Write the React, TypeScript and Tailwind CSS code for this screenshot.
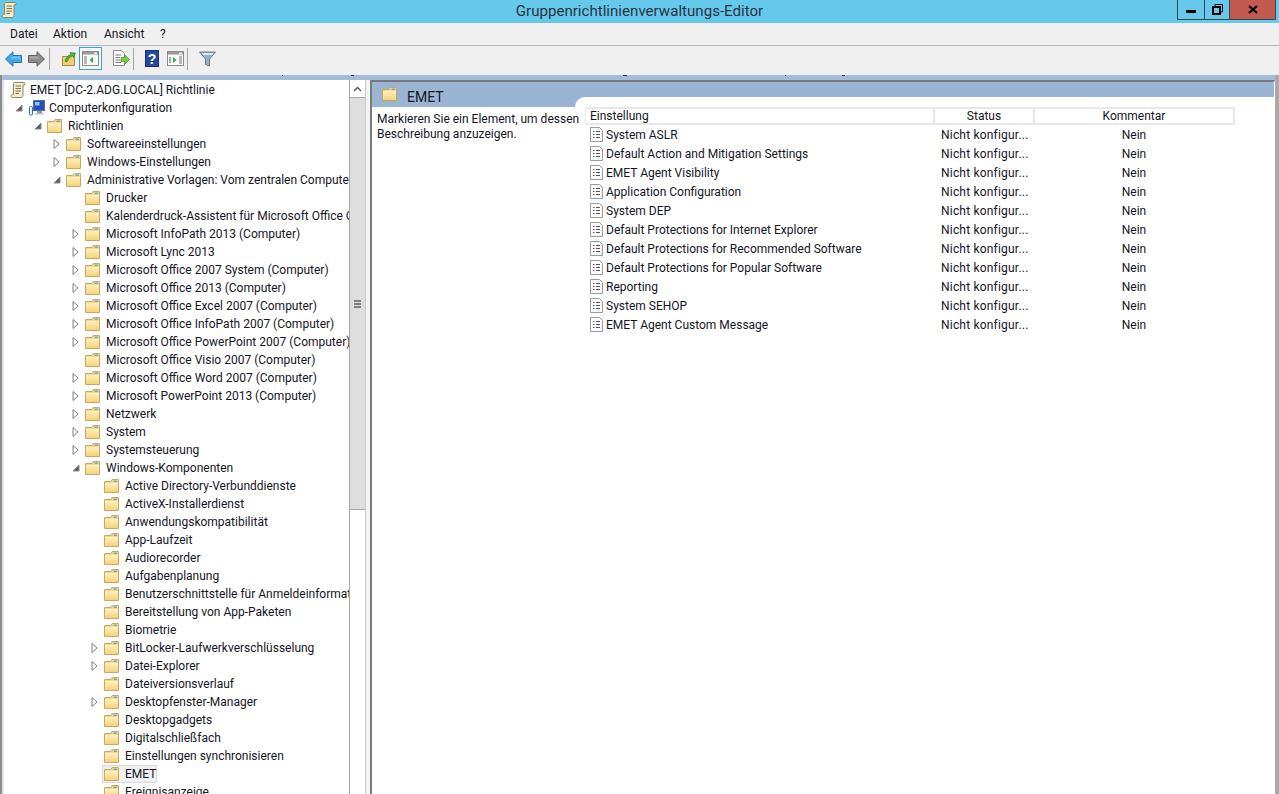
import React from "react";

type TreeItem = { label: string; depth: 1 | 2 | 3 | 4 | 5; arrow?: "open" | "closed"; selected?: boolean };

const tree: TreeItem[] = [
  { label: "Richtlinien", depth: 2, arrow: "open" },
  { label: "Softwareeinstellungen", depth: 3, arrow: "closed" },
  { label: "Windows-Einstellungen", depth: 3, arrow: "closed" },
  { label: "Administrative Vorlagen: Vom zentralen Computer abgerufene Richtliniendefinitionen", depth: 3, arrow: "open" },
  { label: "Drucker", depth: 4 },
  { label: "Kalenderdruck-Assistent für Microsoft Office Outlook", depth: 4 },
  { label: "Microsoft InfoPath 2013 (Computer)", depth: 4, arrow: "closed" },
  { label: "Microsoft Lync 2013", depth: 4, arrow: "closed" },
  { label: "Microsoft Office 2007 System (Computer)", depth: 4, arrow: "closed" },
  { label: "Microsoft Office 2013 (Computer)", depth: 4, arrow: "closed" },
  { label: "Microsoft Office Excel 2007 (Computer)", depth: 4, arrow: "closed" },
  { label: "Microsoft Office InfoPath 2007 (Computer)", depth: 4, arrow: "closed" },
  { label: "Microsoft Office PowerPoint 2007 (Computer)", depth: 4, arrow: "closed" },
  { label: "Microsoft Office Visio 2007 (Computer)", depth: 4 },
  { label: "Microsoft Office Word 2007 (Computer)", depth: 4, arrow: "closed" },
  { label: "Microsoft PowerPoint 2013 (Computer)", depth: 4, arrow: "closed" },
  { label: "Netzwerk", depth: 4, arrow: "closed" },
  { label: "System", depth: 4, arrow: "closed" },
  { label: "Systemsteuerung", depth: 4, arrow: "closed" },
  { label: "Windows-Komponenten", depth: 4, arrow: "open" },
  { label: "Active Directory-Verbunddienste", depth: 5 },
  { label: "ActiveX-Installerdienst", depth: 5 },
  { label: "Anwendungskompatibilität", depth: 5 },
  { label: "App-Laufzeit", depth: 5 },
  { label: "Audiorecorder", depth: 5 },
  { label: "Aufgabenplanung", depth: 5 },
  { label: "Benutzerschnittstelle für Anmeldeinformationen", depth: 5 },
  { label: "Bereitstellung von App-Paketen", depth: 5 },
  { label: "Biometrie", depth: 5 },
  { label: "BitLocker-Laufwerkverschlüsselung", depth: 5, arrow: "closed" },
  { label: "Datei-Explorer", depth: 5, arrow: "closed" },
  { label: "Dateiversionsverlauf", depth: 5 },
  { label: "Desktopfenster-Manager", depth: 5, arrow: "closed" },
  { label: "Desktopgadgets", depth: 5 },
  { label: "Digitalschließfach", depth: 5 },
  { label: "Einstellungen synchronisieren", depth: 5 },
  { label: "EMET", depth: 5, selected: true },
  { label: "Ereignisanzeige", depth: 5 },
];

const settings = [
  "System ASLR",
  "Default Action and Mitigation Settings",
  "EMET Agent Visibility",
  "Application Configuration",
  "System DEP",
  "Default Protections for Internet Explorer",
  "Default Protections for Recommended Software",
  "Default Protections for Popular Software",
  "Reporting",
  "System SEHOP",
  "EMET Agent Custom Message",
];

const depthPadding = {
  1: "pl-[11px]",
  2: "pl-[30px]",
  3: "pl-[49px]",
  4: "pl-[68px]",
  5: "pl-[87px]",
};

const Folder = () => (
  <svg width="15" height="14" viewBox="0 0 15 14" className="shrink-0">
    <defs>
      <linearGradient id="folderFill" x1="0" y1="0" x2="0" y2="1">
        <stop offset="0" stopColor="#fff1bd" />
        <stop offset="1" stopColor="#f5d27a" />
      </linearGradient>
    </defs>
    <path d="M0.5 2.5 V13.5 H14.5 V0.5 H8 L7 2.5 Z" fill="#f3d88f" stroke="#cba765" />
    <path d="M1 4 H14 V13 H1 Z" fill="url(#folderFill)" />
    <rect x="9.5" y="1.5" width="3.5" height="1.5" fill="#6ea9da" />
  </svg>
);

const Scroll = () => (
  <svg width="16" height="18" viewBox="0 0 16 18" className="shrink-0">
    <path d="M4.5 1.5 H14 C15 1.5 15.5 2.5 15 3.5 L13 4 V13 C13 15 12.5 16.5 11 16.5 H2.5 C1 16.5 0.5 14 2.5 13.5 H3.5 V3 C3.5 2 4 1.5 4.5 1.5 Z" fill="#f6edc9" stroke="#8e8464" />
    <path d="M5.5 5 H11 M5.5 7.5 H11 M5.5 10 H11 M5.5 12.5 H9" stroke="#77705a" />
  </svg>
);

const Computer = () => (
  <svg width="16" height="16" viewBox="0 0 16 16" className="shrink-0">
    <rect x="4.5" y="0.5" width="11" height="10" fill="#1f4fc0" stroke="#5e6f88" />
    <rect x="6" y="2" width="4.5" height="3.5" fill="#8fc6f5" />
    <rect x="8" y="11" width="5" height="2" fill="#8d99a8" />
    <rect x="6.5" y="13" width="8" height="1.5" fill="#b5bdc8" />
    <rect x="0.5" y="6.5" width="3" height="8.5" rx="1" fill="#e8eef5" stroke="#3d6ea5" />
  </svg>
);

const DocRow = () => (
  <svg width="13" height="15" viewBox="0 0 13 15" className="shrink-0">
    <path d="M0.5 0.5 H9.5 L12.5 3.5 V14.5 H0.5 Z" fill="#fbfbfb" stroke="#9a9a9a" />
    <path d="M3 4.5 H4.5 M3 7.5 H4.5 M3 10.5 H4.5 M6 4.5 H10 M6 7.5 H10 M6 10.5 H10" stroke="#555" />
  </svg>
);

const OpenArrow = () => (
  <svg width="8" height="8" viewBox="0 0 8 8">
    <path d="M7 1 V7 H1 Z" fill="#5c5c5c" stroke="#8a8a8a" />
  </svg>
);

const ClosedArrow = () => (
  <svg width="7" height="10" viewBox="0 0 7 10">
    <path d="M1 0.5 L6 5 L1 9.5 Z" fill="#fff" stroke="#7f7f7f" />
  </svg>
);

const Separator = () => <div className="w-px h-[22px] bg-[#a5a5a5]" />;

const NavArrow = ({ flip, fill, stroke }: { flip?: boolean; fill: string; stroke: string }) => (
  <svg width="17" height="16" viewBox="0 0 17 16" className={flip ? "-scale-x-100" : ""}>
    <path d="M0.5 8 L8 0.8 V4.5 H16.5 V11.5 H8 V15.2 Z" fill={fill} stroke={stroke} strokeLinejoin="round" />
    <path d="M8.5 5.5 H15.5 V7.5 H5 Z" fill="#fff" opacity="0.3" />
  </svg>
);

const WindowIcon = ({ mirrored }: { mirrored?: boolean }) => (
  <svg width="17" height="15" viewBox="0 0 17 15">
    <rect x="0.5" y="0.5" width="16" height="14" fill="#fafafa" stroke="#8a8a8a" />
    <rect x="1" y="1" width="15" height="2.5" fill="#9a9a9a" />
    <rect x="12" y="1.5" width="3" height="1.5" fill="#eee" />
    {mirrored ? (
      <>
        <path d="M3 6 V12" stroke="#aaa" strokeWidth="2" />
        <path d="M6 6 L9.5 9 L6 12 Z" fill="#35a83a" />
        <path d="M12 6 H15 M12 8 H15 M12 10 H15 M12 12 H15" stroke="#777" />
      </>
    ) : (
      <>
        <path d="M2 6 H5 M2 8 H5 M2 10 H5 M2 12 H5" stroke="#777" />
        <path d="M11 6 L7.5 9 L11 12 Z" fill="#35a83a" />
      </>
    )}
  </svg>
);

const Toolbar = () => (
  <div className="h-[29px] bg-[#f0f0f0] flex items-center pl-[5px] pb-[4px] shrink-0">
    <NavArrow fill="#42a6e8" stroke="#1f74b8" />
    <div className="ml-[6px]">
      <NavArrow flip fill="#8c8c8c" stroke="#5e5e5e" />
    </div>
    <div className="ml-[4px]">
      <Separator />
    </div>
    <svg width="16" height="16" viewBox="0 0 16 16" className="ml-[11px]">
      <path d="M1.5 5.5 H7 L8 4.5 H13.5 V14.5 H1.5 Z" fill="#f3cf73" stroke="#a98a3c" />
      <path d="M4 10 C5 6 8 4 10 3.5 L9 1.5 L14.5 2 L12.5 6.5 L11.5 5 C9 6 7 8 6 11 Z" fill="#4fae3a" stroke="#2f7d25" strokeWidth="0.6" />
    </svg>
    <div className="ml-[2px] w-[23px] h-[23px] border border-[#3ea0e4] bg-[#f7f9fb] flex items-center justify-center">
      <WindowIcon />
    </div>
    <svg width="18" height="17" viewBox="0 0 18 17" className="ml-[10px]">
      <path d="M1.5 0.5 H9.5 L12.5 3.5 V15.5 H1.5 Z" fill="#fafafa" stroke="#8e8e8e" />
      <path d="M3.5 5 H9 M3.5 7.5 H8 M3.5 10 H8 M3.5 12.5 H9" stroke="#777" />
      <path d="M9 7.5 H13 V5 L17.5 9.5 L13 14 V11.5 H9 Z" fill="#7fcb47" stroke="#4a9a2a" strokeWidth="0.7" />
    </svg>
    <div className="ml-[3px]">
      <Separator />
    </div>
    <div className="ml-[11px] w-[14px] h-[17px] bg-[#27499c] border border-[#16307a] flex items-center justify-center text-white font-bold text-[14px] leading-none font-['Liberation_Sans',sans-serif]">
      ?
    </div>
    <div className="ml-[8px] flex">
      <WindowIcon mirrored />
    </div>
    <div className="ml-[3px]">
      <Separator />
    </div>
    <svg width="17" height="16" viewBox="0 0 17 16" className="ml-[11px]">
      <path d="M0.5 1 H16.5 L10.5 8 V15 L6.5 13.5 V8 Z" fill="#9db0c0" stroke="#6c7c88" />
      <path d="M2.5 2 H14.5 L13 4 H4 Z" fill="#dfe7ee" />
    </svg>
  </div>
);

const TreeRow = ({ item }: { item: TreeItem }) => (
  <div className={`h-[18px] flex items-center shrink-0 ${depthPadding[item.depth]}`}>
    <div className="w-[14px] h-[18px] flex items-center shrink-0">
      {item.arrow === "open" && <OpenArrow />}
      {item.arrow === "closed" && <ClosedArrow />}
    </div>
    <div className={`flex items-center h-[18px] -ml-[3px] pl-[1px] border ${item.selected ? "bg-[#f0f0f0] border-[#dadada]" : "border-transparent"}`}>
      <Folder />
      <span className="ml-[6px] whitespace-nowrap">{item.label}</span>
    </div>
  </div>
);

const Scrollbar = () => (
  <div className="w-[17px] shrink-0 flex flex-col border-x border-[#a8a8a8] bg-white">
    <div className="h-[18px] flex items-center justify-center shrink-0 border-b border-[#a8a8a8]">
      <svg width="9" height="6" viewBox="0 0 9 6">
        <path d="M1 5 L4.5 1.5 L8 5" fill="none" stroke="#555" strokeWidth="1.4" />
      </svg>
    </div>
    <div className="h-[412px] bg-[#dedede] border-b border-[#a8a8a8] flex flex-col items-center justify-center gap-px shrink-0">
      <div className="w-[7px] h-[2px] bg-[#808080]" />
      <div className="w-[7px] h-[2px] bg-[#808080]" />
      <div className="w-[7px] h-[2px] bg-[#808080]" />
    </div>
  </div>
);

const ResultRow = ({ name }: { name: string }) => (
  <div className="h-[19px] flex items-center">
    <div className="w-[349px] flex items-center pl-[5px] shrink-0">
      <DocRow />
      <span className="ml-[3px] whitespace-nowrap">{name}</span>
    </div>
    <div className="w-[100px] pl-[7px] shrink-0 whitespace-nowrap tracking-[0.2px]">Nicht konfigur...</div>
    <div className="w-[200px] text-center shrink-0">Nein</div>
  </div>
);

const HeaderCell = ({ label, className }: { label: string; className: string }) => (
  <div className={`h-full flex items-center border-r-2 border-[#e8e8e8] shrink-0 ${className}`}>{label}</div>
);

export default function App() {
  return (
    <div className="relative w-[1279px] h-[794px] overflow-hidden flex flex-col bg-[#f0f0f0] text-[12px] text-[#15151f] font-['Roboto',sans-serif]">
      {/* title bar */}
      <div className="relative h-[23px] bg-[#66c9ec] flex items-center justify-center shrink-0">
        <div className="absolute left-[1px] top-[1px]">
          <Scroll />
        </div>
        <span className="text-[15.1px] text-[#26343c]">Gruppenrichtlinienverwaltungs-Editor</span>
        <div className="absolute top-0 left-[1177px] flex h-[20px] border-x border-b border-[#37474f]">
          <div className="w-[27px] flex items-center justify-center border-r border-[#37474f]">
            <div className="w-[10px] h-[3px] bg-black mt-[3px]" />
          </div>
          <div className="w-[25px] flex items-center justify-center border-r border-[#37474f]">
            <svg width="11" height="11" viewBox="0 0 11 11">
              <path d="M3 2 V0.5 H10.5 V8 H9" fill="none" stroke="#000" />
              <rect x="1" y="3" width="7" height="7" fill="none" stroke="#000" strokeWidth="2" />
            </svg>
          </div>
          <div className="w-[45px] bg-[#c25a50] flex items-center justify-center">
            <svg width="10" height="9" viewBox="0 0 10 9">
              <path d="M1 1 L9 8 M9 1 L1 8" stroke="#000" strokeWidth="2.2" />
            </svg>
          </div>
        </div>
      </div>

      {/* menu */}
      <div className="h-[23px] flex items-center border-b border-[#b4b4b4] shrink-0 pl-[10px]">
        <span className="w-[43px]">Datei</span>
        <span className="w-[51px]">Aktion</span>
        <span className="w-[56px]">Ansicht</span>
        <span>?</span>
      </div>

      <Toolbar />

      {/* main area */}
      <div className="flex-1 min-h-0 flex bg-[#a3bcdb] pt-[5px] border-l-2 border-[#8d8d8d] border-r-4 border-r-[#a9a9a9]">
        <div className="w-[2px] bg-[#dfe3e8] shrink-0" />

        {/* left tree */}
        <div className="w-[361px] shrink-0 flex bg-white">
          <div className="w-[345px] shrink-0 overflow-hidden pt-px flex flex-col">
            <div className="h-[18px] flex items-center pl-[6px] shrink-0">
              <Scroll />
              <span className="ml-[4px] whitespace-nowrap">EMET [DC-2.ADG.LOCAL] Richtlinie</span>
            </div>
            <div className="h-[18px] flex items-center pl-[11px] shrink-0">
              <div className="w-[14px] flex items-center shrink-0">
                <OpenArrow />
              </div>
              <Computer />
              <span className="ml-[4px] whitespace-nowrap">Computerkonfiguration</span>
            </div>
            {tree.map((item) => (
              <TreeRow key={item.label} item={item} />
            ))}
          </div>
          <Scrollbar />
        </div>

        {/* splitter */}
        <div className="w-[5px] shrink-0 bg-[#f4f4f4] border-l border-[#c8c8c8]" />

        {/* right pane */}
        <div className="flex-1 min-w-0 flex flex-col bg-white border-l-2 border-t-2 border-[#7a7a7a] border-r border-r-white">
          <div className="h-[25px] bg-[#9ab5d3] flex items-start pl-[10px] pt-[5px] shrink-0">
            <Folder />
            <span className="ml-[10px] text-[14px] leading-[20px]">EMET</span>
          </div>
          <div className="flex-1 min-h-0 flex">
            <div className="relative z-10 w-[203px] shrink-0 pl-[5px] pt-[5px] leading-[15px] whitespace-nowrap">
              Markieren Sie ein Element, um dessen
              <br />
              Beschreibung anzuzeigen.
            </div>
            <div className="flex-1 -mt-[10px] bg-white rounded-tl-[10px] pt-[10px] pl-[10px]">
              <div className="h-[18px] flex border-y-2 border-l border-[#e8e8e8] bg-white w-[650px]">
                <HeaderCell label="Einstellung" className="w-[349px] pl-[4px]" />
                <HeaderCell label="Status" className="w-[100px] justify-center" />
                <HeaderCell label="Kommentar" className="w-[200px] justify-center" />
              </div>
              <div>
                {settings.map((name) => (
                  <ResultRow key={name} name={name} />
                ))}
              </div>
            </div>
          </div>
        </div>
      </div>

      <div className="absolute top-[75px] left-[282px] w-[1px] h-[1px] bg-[#333]" />
      <div className="absolute top-[75px] left-[351px] w-[3px] h-[1px] bg-[#333]" />
      <div className="absolute top-[75px] left-[623px] w-[4px] h-[1px] bg-[#333]" />
      <div className="absolute top-[75px] left-[785px] w-[1px] h-[1px] bg-[#333]" />
      <div className="absolute top-[75px] left-[842px] w-[3px] h-[1px] bg-[#333]" />
    </div>
  );
}
